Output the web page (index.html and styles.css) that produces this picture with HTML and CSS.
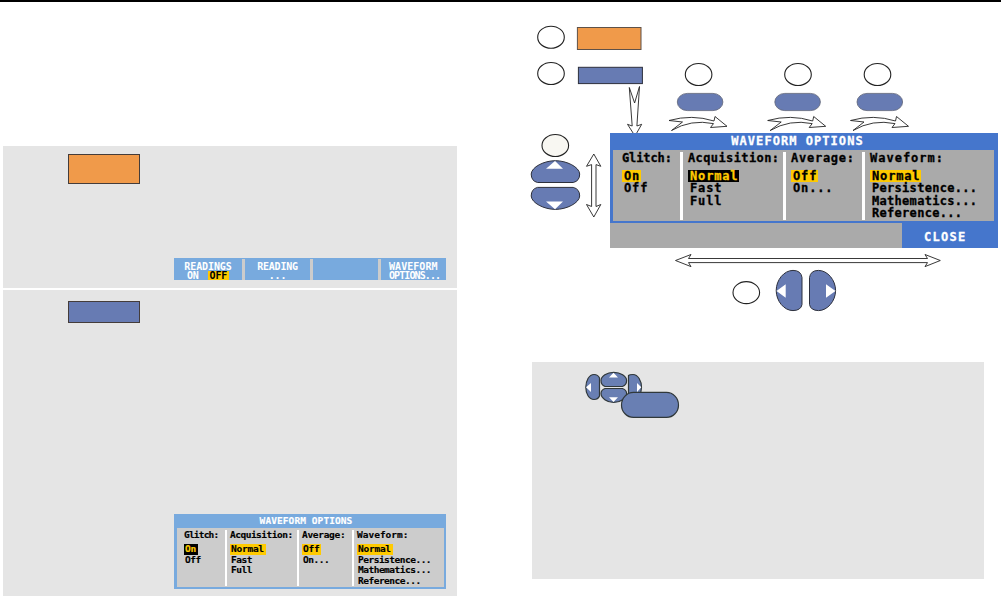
FILE: index.html
```html
<!DOCTYPE html>
<html lang="en">
<head>
<meta charset="utf-8">
<title>Waveform options</title>
<link rel="stylesheet" href="styles.css">
</head>
<body>
<main class="page">
  <div class="left">
    <section class="step step-one">
      <div class="key key-orange"></div>
      <div class="softkeys">
        <div class="softkey"><span class="w-readings">READINGS</span><span class="pair"><span>ON</span><b class="hl">OFF</b></span></div>
        <div class="softkey"><span>READING</span><span>...</span></div>
        <div class="softkey"></div>
        <div class="softkey start"><span>WAVEFORM</span><span class="tight">OPTIONS...</span></div>
      </div>
    </section>
    <section class="step step-two">
      <div class="key key-blue"></div>
      <div class="dialog small">
        <div class="title">WAVEFORM OPTIONS</div>
        <div class="cols">
          <div class="col"><h3>Glitch:</h3><p><span class="inv">On</span></p><p>Off</p></div>
          <div class="col"><h3 class="acq">Acquisition:</h3><p><span class="hl">Normal</span></p><p>Fast</p><p>Full</p></div>
          <div class="col"><h3 class="avg">Average:</h3><p><span class="hl">Off</span></p><p>On...</p></div>
          <div class="col"><h3 class="wav">Waveform:</h3><p><span class="hl">Normal</span></p><p class="long">Persistence...</p><p class="long">Mathematics...</p><p class="long">Reference...</p></div>
        </div>
      </div>
    </section>
  </div>
  <div class="right">
    <section class="diagram">
      <svg class="art" viewBox="500 2 501 360" width="501" height="360">
        <defs>
          <path id="swoop" d="M669 120.5Q692 114 714 121L715 116.5L727 126.3L710.5 127.5L713.5 123.6Q691 119 671.5 130.5L682.5 122Z"/>
        </defs>
        <g class="ring">
          <ellipse cx="551" cy="37.2" rx="13.3" ry="11"/>
          <ellipse cx="551" cy="73.5" rx="13.3" ry="11"/>
          <ellipse cx="698.6" cy="74.5" rx="13.3" ry="11"/>
          <ellipse cx="798" cy="74.5" rx="13.3" ry="11"/>
          <ellipse cx="877.5" cy="74.5" rx="13.3" ry="11"/>
          <ellipse class="cream" cx="555.3" cy="145.5" rx="13.3" ry="11"/>
          <ellipse cx="746.3" cy="292.6" rx="13.3" ry="11"/>
        </g>
        <rect class="orange" x="577.4" y="27.5" width="63.6" height="22"/>
        <rect class="blue" x="578.4" y="67.3" width="64" height="16.3"/>
        <g class="blue soft">
          <rect x="677.3" y="93.4" width="45.6" height="17.2" rx="10" ry="8.6"/>
          <rect x="774.8" y="93.4" width="45.6" height="17.2" rx="10" ry="8.6"/>
          <rect x="857" y="93.4" width="45.6" height="17.2" rx="10" ry="8.6"/>
        </g>
        <g class="line">
          <use href="#swoop"/><use href="#swoop" x="98.7"/><use href="#swoop" x="181.5"/>
          <path d="M629.3 87.5L634.6 103L639.5 86.5L636.9 126L641.7 124.3L635 136L627.5 124.3L632.2 126Z"/>
          <path d="M593.8 154L600.8 166.3L596 164.6V206.5L600.8 204.5L593.8 217L586.5 204.5L591.6 206.5V164.6L586.5 166.3Z"/>
          <path d="M675.5 260.5L691 254.5L688.5 258.5H927.5L925 254.5L940.3 260.5L925 266.6L927.5 262.6H688.5L691 266.6Z"/>
        </g>
        <g class="blue">
          <path d="M537.5 182.5Q531.2 181 531.2 174C531.6 167 544 160.7 555.4 160.7S579.3 167 579.7 174Q579.7 181 573.2 182.5Z"/>
          <path d="M537.5 187.4Q531.2 189 531.2 196C531.6 203 544 209.4 555.4 209.4S579.3 203 579.7 196Q579.7 189 573.2 187.4Z"/>
          <path d="M802 277.5Q801 270.4 793 270.4C784 270.4 776.2 280 776.2 290.5S784 310.6 793 310.6Q801 310.4 802 304.5Z"/>
          <path d="M809.5 277.5Q810.5 270.4 818.5 270.4C827.5 270.4 835.6 280 835.6 290.5S827.5 310.6 818.5 310.6Q810.5 310.4 809.5 304.5Z"/>
        </g>
        <path class="white" d="M555 161L546 168.8H563ZM546 201.4H563L555 209.3ZM776.5 291L785.7 284.2V297.8ZM835.5 291L826 284.2V297.8Z"/>
      </svg>
      <div class="dialog large">
        <div class="title">WAVEFORM OPTIONS</div>
        <div class="cols">
          <div class="col"><h3>Glitch:</h3><p><span class="hl">On</span></p><p>Off</p></div>
          <div class="col"><h3 class="acq">Acquisition:</h3><p><span class="inv">Normal</span></p><p>Fast</p><p>Full</p></div>
          <div class="col"><h3 class="avg">Average:</h3><p><span class="hl">Off</span></p><p>On...</p></div>
          <div class="col"><h3 class="wav">Waveform:</h3><p><span class="hl">Normal</span></p><p class="long">Persistence...</p><p class="long">Mathematics...</p><p class="long">Reference...</p></div>
        </div>
        <div class="foot"><span class="close">CLOSE</span></div>
      </div>
    </section>
    <section class="step step-three">
      <svg class="pad" viewBox="584 370 97 50" width="97" height="50">
        <g>
          <path d="M599.5 378Q598 374.5 594 374.5C589 374.5 585.8 381 585.8 387.3S589 399.5 594 399.5Q598 399.5 599.5 396Z"/>
          <path d="M628.5 375.5Q629.5 374.5 633 374.5C638 374.5 641.5 381 641.5 387.3S638 399.5 633 399.5H628.5Z"/>
          <path d="M605 386.5Q601 385 601 380.5C601 376 607 372.3 613.7 372.3S626.6 376 626.6 380.5Q626.6 385 622.5 386.5Z"/>
          <path d="M605 388.5Q601 390 601 393.5C601 398 607 402.4 613.7 402.4S626.6 398 626.6 393.5Q626.6 390 622.5 388.5Z"/>
          <rect x="621.5" y="392.4" width="57" height="25" rx="12" ry="12.5"/>
        </g>
        <path class="white" d="M613.5 372.8L609 377.5H618ZM609 397.3H618L613.5 402ZM586 387.3L591 383V392ZM641.3 387.3L637 383V392Z"/>
      </svg>
    </section>
  </div>
</main>
</body>
</html>
```
FILE: styles.css
```css
* { box-sizing: border-box; }
body { margin: 0; background: #fff; }
.page {
  display: flex;
  width: 1001px;
  height: 596px;
  overflow: hidden;
  border-top: 2px solid #000;
  font-family: "DejaVu Sans Mono", monospace;
  font-weight: bold;
  color: #000;
}
.left {
  display: flex;
  flex-direction: column;
  gap: 2px;
  width: 500px;
  padding: 144px 43px 0 3px;
}
.right { width: 501px; }

.step { display: flex; flex-direction: column; background: #e5e5e5; }
.step-one { height: 142px; padding: 8px 0 0 65px; }
.step-two { height: 306px; padding: 11px 0 0 65px; }
.step-three { width: 452px; height: 217px; margin-left: 32px; padding: 8px 0 0 52px; }
.key { width: 72px; border: 1px solid #443c3a; }
.key-orange { height: 30px; background: #f09a4a; }
.key-blue { height: 22px; background: #677bb3; }

.softkeys {
  display: grid;
  grid-template-columns: 68px 65px 65px 65px;
  grid-template-rows: 21px;
  gap: 3px;
  width: 272px;
  height: 22px;
  margin: 74px 0 0 106px;
  background: #ccc;
  border-top: 1px solid #78aade;
}
.softkey {
  display: flex;
  flex-direction: column;
  align-items: center;
  padding-top: 3px;
  background: #78aade;
  color: #fff;
  font-size: 10px;
  line-height: 9px;
  letter-spacing: -0.2px;
  white-space: nowrap;
}
.start { align-items: flex-start; padding-left: 8px; letter-spacing: 0.05px; }
.tight { letter-spacing: -0.9px; }
.w-readings { letter-spacing: -0.1px; }
.pair { display: flex; gap: 9px; }
.pair .hl { padding: 0 2px; }

.hl { background: #ffca00; color: #000; }
.inv { background: #000; color: #ffca00; }

h3, p { margin: 0; font-size: inherit; white-space: nowrap; }
.title { text-align: center; color: #fff; white-space: nowrap; }
.cols { display: grid; }
.col { border-right: solid #fff; }
.col:last-child { border-right: 0; }
.col p span { display: inline-block; }

.small {
  width: 272px;
  height: 75px;
  margin: 191px 0 0 106px;
  padding: 0 2px 2px 3px;
  background: #78aade;
  font-size: 9.5px;
  -webkit-text-stroke: 0.15px;
}
.small .title { height: 14px; line-height: 14px; padding-right: 9px; letter-spacing: 0.08px; }
.small .cols {
  grid-template-columns: 50px 72px 55px 90px;
  height: 59px;
  padding: 2px 0 1px;
  background: #ccc;
}
.small .col { border-right-width: 2px; padding-left: 7px; letter-spacing: -0.5px; }
.small .col + .col { padding-left: 3px; }
.small .col h3 { height: 14px; line-height: 10px; letter-spacing: -0.8px; }
.small .col h3.acq { letter-spacing: -0.5px; }
.small .col h3.avg { letter-spacing: -0.3px; }
.small .col h3.wav { letter-spacing: 0; }
.small .col p { height: 10.5px; line-height: 10px; padding-left: 1px; }
.small .col p span { height: 10.5px; margin-left: -1px; padding: 0 2px 0 1px; letter-spacing: -0.25px; }
.small .col p.long { letter-spacing: -0.5px; }

.diagram { position: relative; height: 360px; padding: 131px 0 0 110px; }
.art { position: absolute; left: 0; top: 0; }
.ring { fill: #fff; stroke: #222; stroke-width: 1.1; }
.cream { fill: #f8f7f2; }
.orange { fill: #f09a4a; stroke: #5f5148; }
.blue { fill: #677bb3; stroke: #2d303c; }
.soft { stroke: #606477; stroke-width: 0.8; }
.line { fill: #fff; stroke: #222; stroke-width: 0.9; }
.white { fill: #fff; }
.pad g { fill: #697fb3; stroke: #30383a; stroke-width: 1.2; }

.large {
  position: relative;
  width: 388px;
  height: 115px;
  background: #4576cc;
  font-size: 12px;
  -webkit-text-stroke: 0.3px;
}
.large .title { height: 17px; line-height: 17px; padding-right: 13px; letter-spacing: 1.05px; }
.large .cols {
  grid-template-columns: 70px 103px 79px 129px;
  width: 381px;
  height: 71px;
  margin-left: 3px;
  padding: 2px 0 1px;
  background: #aaa;
}
.large .col { border-right-width: 3px; padding-left: 9px; letter-spacing: 0.85px; }
.large .col + .col { padding-left: 5px; }
.large .col h3 { height: 18px; line-height: 13px; letter-spacing: -0.1px; }
.large .col h3.acq { letter-spacing: 0.4px; }
.large .col h3.avg { letter-spacing: 0.75px; }
.large .col h3.wav { letter-spacing: 1px; }
.large .col p { height: 12.4px; line-height: 13px; padding-left: 2px; }
.large .col p span { height: 12px; margin-left: -2px; padding: 0 1px 0 2px; }
.large .col p.long { letter-spacing: 0.3px; }
.foot { display: flex; justify-content: flex-end; width: 388px; height: 25px; margin-top: 2px; background: #aaa; }
.close { width: 96px; background: #4576cc; color: #fff; line-height: 29px; padding-left: 22px; letter-spacing: 1.3px; }
```
